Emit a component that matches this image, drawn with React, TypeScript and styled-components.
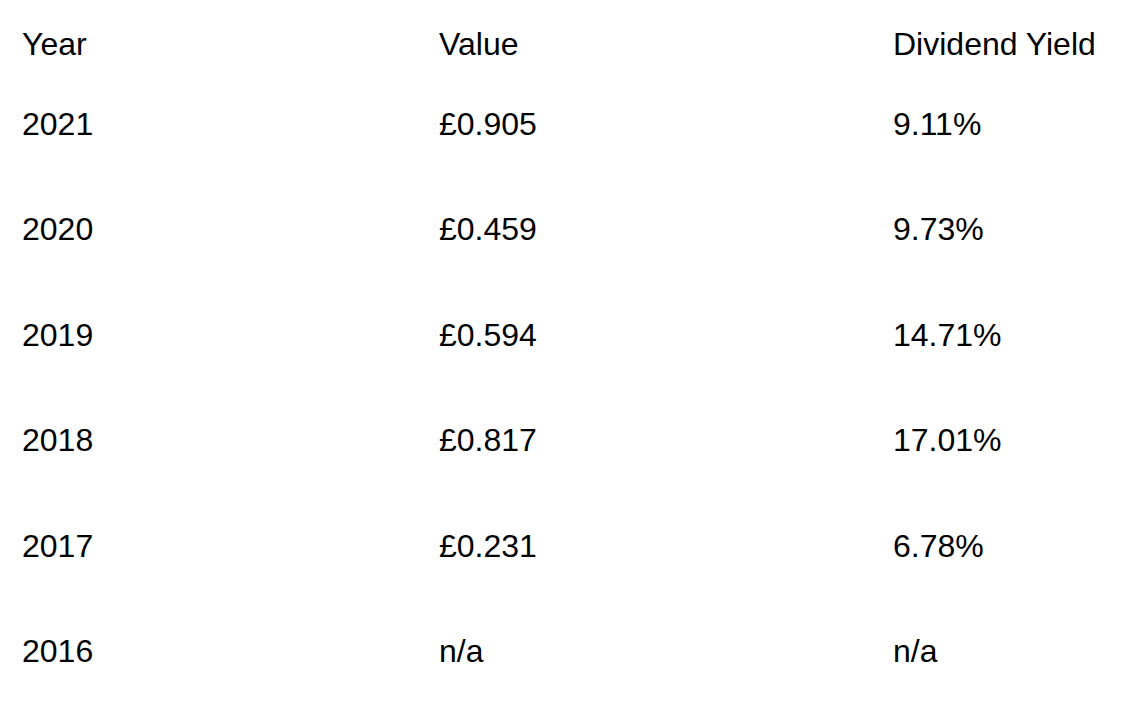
import React from "react";
import styled, { createGlobalStyle } from "styled-components";

const Global = createGlobalStyle`
  html, body { margin: 0; padding: 0; background: #fff; }
  body { font-family: "Liberation Sans", Arial, sans-serif; color: #000; }
`;

const Table = styled.div`
  display: flex;
  flex-direction: column;
  padding: 26px 0 0 22px;
`;

const Row = styled.div<{ $gap: number }>`
  display: grid;
  grid-template-columns: 417px 454px 1fr;
  font-size: 32px;
  line-height: 37px;
  margin-bottom: ${(p) => p.$gap}px;

  &:last-child {
    margin-bottom: 0;
  }
`;

const Cell = styled.div`
  white-space: nowrap;
`;

const data: [string, string, string][] = [
  ["2021", "£0.905", "9.11%"],
  ["2020", "£0.459", "9.73%"],
  ["2019", "£0.594", "14.71%"],
  ["2018", "£0.817", "17.01%"],
  ["2017", "£0.231", "6.78%"],
  ["2016", "n/a", "n/a"],
];

export default function App() {
  return (
    <>
      <Global />
      <Table>
        <Row $gap={43}>
          <Cell>Year</Cell>
          <Cell>Value</Cell>
          <Cell>Dividend Yield</Cell>
        </Row>
        {data.map((r) => (
          <Row key={r[0]} $gap={68.4}>
            <Cell>{r[0]}</Cell>
            <Cell>{r[1]}</Cell>
            <Cell>{r[2]}</Cell>
          </Row>
        ))}
      </Table>
    </>
  );
}
